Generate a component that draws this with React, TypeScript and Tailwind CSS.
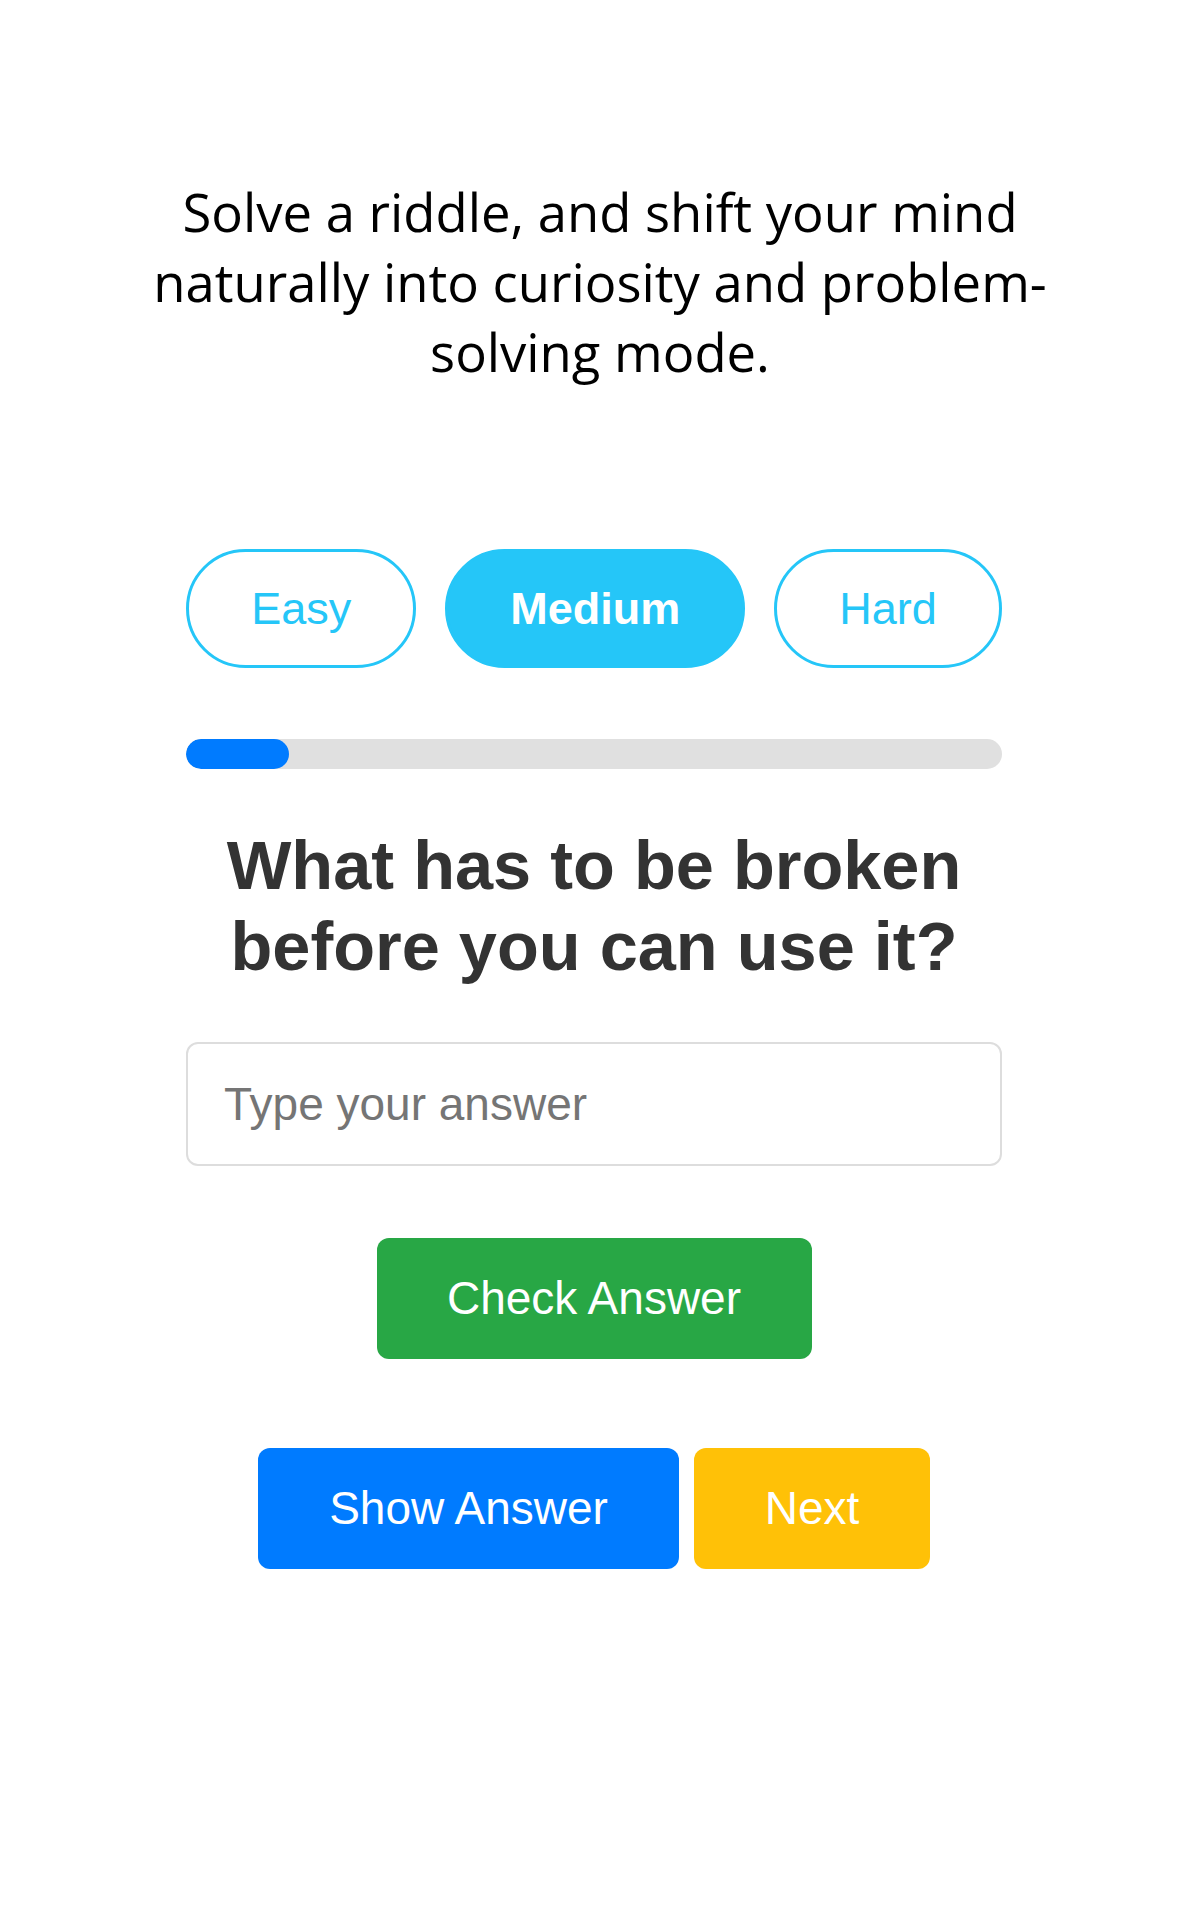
import { useState } from "react";

const levels = ["Easy", "Medium", "Hard"] as const;

export default function App() {
  const [level, setLevel] = useState<(typeof levels)[number]>("Medium");
  const [answer, setAnswer] = useState("");

  return (
    <div className="min-h-[1920px] bg-white pt-[177px]">
      <p className="mx-auto w-[960px] text-center font-['Open_Sans',sans-serif] text-[52.6px] leading-[70px] text-black">
        Solve a riddle, and shift your mind naturally into curiosity and
        problem-solving mode.
      </p>

      <div className="flex justify-center pr-[12px]">
        <div className="mt-[162px] flex w-[816px] flex-col items-center font-['Liberation_Sans',Arial,sans-serif]">
          <div className="flex gap-[29px]">
            {levels.map((name) => {
              const active = name === level;
              return (
                <button
                  key={name}
                  type="button"
                  onClick={() => setLevel(name)}
                  className={`h-[119px] rounded-full border-[3px] border-[#25c6f8] px-[62px] text-[45px] ${
                    active
                      ? "bg-[#25c6f8] font-bold text-white"
                      : "bg-white text-[#25c6f8]"
                  }`}
                >
                  {name}
                </button>
              );
            })}
          </div>

          <div className="mt-[71px] h-[30px] w-full overflow-hidden rounded-full bg-[#e0e0e0]">
            <div className="h-full w-[103px] rounded-full bg-[#007bff]" />
          </div>

          <h2 className="mt-[56px] text-center text-[68.5px] font-bold leading-[81px] text-[#333333]">
            What has to be broken before you can use it?
          </h2>

          <input
            value={answer}
            onChange={(e) => setAnswer(e.target.value)}
            placeholder="Type your answer"
            className="mt-[55px] h-[124px] w-full rounded-[12px] border-2 border-[#dddddd] px-[36px] text-[46px] text-[#333333] outline-none placeholder:text-[#757575]"
          />

          <button
            type="button"
            className="mt-[72px] h-[121px] w-[435px] rounded-[12px] bg-[#28a745] text-[46px] text-white"
          >
            Check Answer
          </button>

          <div className="mt-[89px] flex gap-[15px]">
            <button
              type="button"
              className="h-[121px] w-[421px] rounded-[12px] bg-[#007bff] text-[46px] text-white"
            >
              Show Answer
            </button>
            <button
              type="button"
              className="h-[121px] w-[236px] rounded-[12px] bg-[#ffc107] text-[46px] text-white"
            >
              Next
            </button>
          </div>
        </div>
      </div>
    </div>
  );
}
